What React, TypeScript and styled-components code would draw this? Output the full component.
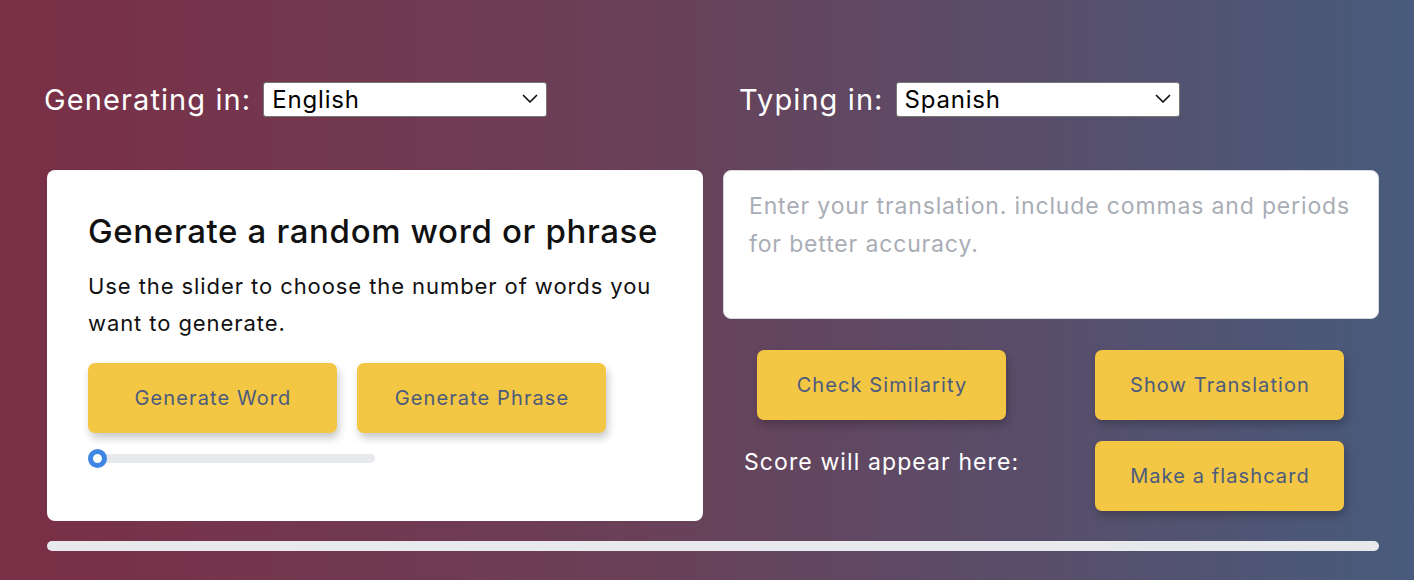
import React from "react";
import styled, { createGlobalStyle } from "styled-components";

const GlobalStyle = createGlobalStyle`
  html, body { margin: 0; padding: 0; }
  body {
    width: 1414px;
    height: 580px;
    overflow: hidden;
    font-family: "Inter", "Noto Sans", sans-serif;
    background: linear-gradient(to right, #7a2f46 0%, #6a4058 45%, #485b7c 100%);
  }
`;

const Page = styled.div`
  box-sizing: border-box;
  width: 1414px;
  height: 580px;
  padding: 82px 35px 0 47px;
  display: flex;
  flex-direction: column;
`;

const TopRow = styled.div`
  display: grid;
  grid-template-columns: 1fr 1fr;
  column-gap: 20px;
  height: 35px;
`;

const LangGroup = styled.div<{ $shift: number }>`
  display: flex;
  align-items: center;
  gap: 12px;
  margin-left: ${(p) => p.$shift}px;
`;

const LangLabel = styled.span`
  color: #ffffff;
  font-size: 29px;
  letter-spacing: 1.1px;
  line-height: 35px;
  white-space: nowrap;
`;

const SelectWrap = styled.div`
  position: relative;
  width: 284px;
  height: 35px;
  flex: none;
`;

const Select = styled.select`
  appearance: none;
  -webkit-appearance: none;
  box-sizing: border-box;
  width: 100%;
  height: 100%;
  border: 1px solid #767676;
  border-radius: 3px;
  background: #ffffff;
  color: #000;
  font-family: "Inter", "Noto Sans", sans-serif;
  font-size: 24px;
  letter-spacing: 0.8px;
  padding: 0 0 0 8px;
  outline: none;
`;

const Chevron = styled.svg`
  position: absolute;
  right: 9px;
  top: 12px;
  width: 16px;
  height: 10px;
  pointer-events: none;
`;

const Main = styled.div`
  margin-top: 53px;
  display: grid;
  grid-template-columns: 656px 656px;
  column-gap: 20px;
`;

const Card = styled.section`
  box-sizing: border-box;
  height: 351px;
  background: #ffffff;
  border-radius: 8px;
  padding: 41px;
`;

const Heading = styled.h2`
  margin: 0;
  font-size: 33px;
  font-weight: 500;
  letter-spacing: 0.65px;
  line-height: 40px;
  color: #111;
  white-space: nowrap;
`;

const Description = styled.p`
  margin: 17px 0 0;
  font-size: 22px;
  line-height: 37px;
  color: #111;
  letter-spacing: 0.92px;
`;

const ButtonRow = styled.div`
  display: flex;
  gap: 20px;
  margin-top: 21px;
`;

const YellowButton = styled.button`
  box-sizing: border-box;
  width: 249px;
  height: 70px;
  border: none;
  border-radius: 7px;
  background: #f3c644;
  color: #4b5b7d;
  font-family: "Inter", "Noto Sans", sans-serif;
  font-size: 20px;
  letter-spacing: 1.1px;
  padding: 0 0 0 1px;
  box-shadow: 2px 5px 9px rgba(0, 0, 0, 0.22);
  cursor: pointer;
  white-space: nowrap;
`;

const Slider = styled.div`
  position: relative;
  margin-top: 21px;
  width: 287px;
  height: 9px;
  border-radius: 5px;
  background: #e8e9ed;
`;

const Thumb = styled.span`
  position: absolute;
  left: 0;
  top: -5px;
  box-sizing: border-box;
  width: 19px;
  height: 19px;
  border-radius: 50%;
  border: 5px solid #3f86e3;
  background: #ffffff;
`;

const RightColumn = styled.div`
  display: flex;
  flex-direction: column;
`;

const TextArea = styled.textarea`
  box-sizing: border-box;
  width: 656px;
  height: 149px;
  resize: none;
  border: 1px solid #d6d9de;
  border-radius: 8px;
  background: #ffffff;
  padding: 16px 25px;
  font-family: "Inter", "Noto Sans", sans-serif;
  font-size: 23px;
  letter-spacing: 0.85px;
  line-height: 38px;
  color: #222;
  outline: none;
  &::placeholder {
    color: #a9adb6;
  }
`;

const ActionGrid = styled.div`
  display: grid;
  grid-template-columns: 338px 249px;
  row-gap: 21px;
  padding: 31px 0 0 34px;
  justify-content: start;
  align-items: start;
`;

const ScoreText = styled.span`
  color: #ffffff;
  font-size: 23px;
  line-height: 28px;
  letter-spacing: 1.1px;
  margin: 7px 0 0 -13px;
  white-space: nowrap;
`;

const ProgressBar = styled.div`
  margin-top: 20px;
  width: 1332px;
  height: 10px;
  border-radius: 5px;
  background: #e8e9ed;
`;

const LanguageSelect: React.FC<{ value: string }> = ({ value }) => (
  <SelectWrap>
    <Select defaultValue={value}>
      <option>English</option>
      <option>Spanish</option>
      <option>French</option>
      <option>German</option>
    </Select>
    <Chevron viewBox="0 0 16 10">
      <path d="M1.5 1.5 L8 8 L14.5 1.5" fill="none" stroke="#111" strokeWidth="1.7" strokeLinecap="round" strokeLinejoin="round" />
    </Chevron>
  </SelectWrap>
);

export default function App() {
  return (
    <>
      <GlobalStyle />
      <Page>
        <TopRow>
          <LangGroup $shift={-3}>
            <LangLabel>Generating in:</LangLabel>
            <LanguageSelect value="English" />
          </LangGroup>
          <LangGroup $shift={16}>
            <LangLabel>Typing in:</LangLabel>
            <LanguageSelect value="Spanish" />
          </LangGroup>
        </TopRow>
        <Main>
          <Card>
            <Heading>Generate a random word or phrase</Heading>
            <Description>
              Use the slider to choose the number of words you want to generate.
            </Description>
            <ButtonRow>
              <YellowButton>Generate Word</YellowButton>
              <YellowButton>Generate Phrase</YellowButton>
            </ButtonRow>
            <Slider>
              <Thumb />
            </Slider>
          </Card>
          <RightColumn>
            <TextArea placeholder="Enter your translation. include commas and periods for better accuracy." />
            <ActionGrid>
              <YellowButton>Check Similarity</YellowButton>
              <YellowButton>Show Translation</YellowButton>
              <ScoreText>Score will appear here:</ScoreText>
              <YellowButton>Make a flashcard</YellowButton>
            </ActionGrid>
          </RightColumn>
        </Main>
        <ProgressBar />
      </Page>
    </>
  );
}
